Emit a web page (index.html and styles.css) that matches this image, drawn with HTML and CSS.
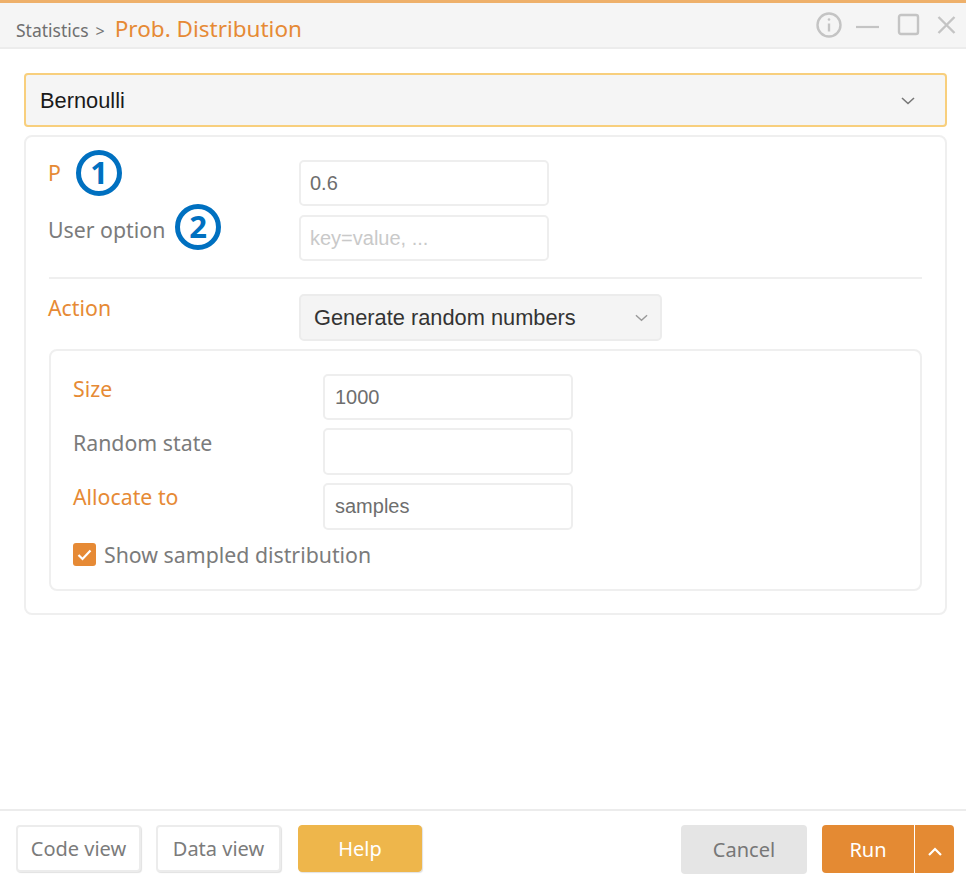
FILE: index.html
```html
<!DOCTYPE html>
<html lang="en">
<head>
    <meta charset="UTF-8">
    <meta name="viewport" content="width=device-width, initial-scale=1.0">
    <title>Prob. Distribution</title>
    <link rel="stylesheet" href="styles.css">
</head>
<body>
    <div class="window">
        <header class="titlebar">
            <div class="crumbs">
                <span class="crumb">Statistics</span>
                <span class="crumb-sep">&gt;</span>
                <span class="crumb-title">Prob. Distribution</span>
            </div>
            <div class="win-icons">
                <svg width="26" height="26" viewBox="0 0 26 26" fill="none" stroke="#c4c4c4" stroke-width="2.4">
                    <circle cx="13" cy="13" r="11.5"/>
                    <path d="M13 11.5v8"/>
                    <circle cx="13" cy="7.5" r="1.3" fill="#c4c4c4" stroke="none"/>
                </svg>
                <svg width="30" height="28" viewBox="0 0 30 28" fill="none" stroke="#c4c4c4" stroke-width="2.2">
                    <path d="M2 16h23"/>
                </svg>
                <svg width="28" height="24" viewBox="0 0 28 24" fill="none" stroke="#c4c4c4" stroke-width="2.4">
                    <rect x="3" y="2" width="19" height="19" rx="2"/>
                </svg>
                <svg width="21" height="20" viewBox="0 0 21 20" fill="none" stroke="#c4c4c4" stroke-width="2.4">
                    <path d="M2.5 2l16 16M18.5 2l-16 16"/>
                </svg>
            </div>
        </header>

        <main class="content">
            <div class="type-select">
                <span>Bernoulli</span>
                <svg class="chev" width="14" height="8" viewBox="0 0 14 8" fill="none" stroke="#777" stroke-width="1.6">
                    <path d="M1 1l6 5.5L13 1"/>
                </svg>
            </div>

            <section class="card">
                <div class="row row-p">
                    <label class="label req">P</label>
                    <input class="input" type="text" value="0.6">
                    <span class="badge badge-1">1</span>
                </div>
                <div class="row row-opt">
                    <label class="label">User option</label>
                    <input class="input" type="text" placeholder="key=value, ...">
                    <span class="badge badge-2">2</span>
                </div>
                <hr class="divider">
                <div class="row row-action">
                    <label class="label req">Action</label>
                    <div class="action-select">
                        <span>Generate random numbers</span>
                        <svg width="13" height="8" viewBox="0 0 14 8" fill="none" stroke="#999" stroke-width="1.5">
                            <path d="M1 1l6 5.5L13 1"/>
                        </svg>
                    </div>
                </div>

                <div class="inner">
                    <div class="row row-size">
                        <label class="label req">Size</label>
                        <input class="input" type="text" value="1000">
                    </div>
                    <div class="row row-state">
                        <label class="label">Random state</label>
                        <input class="input" type="text">
                    </div>
                    <div class="row row-alloc">
                        <label class="label req">Allocate to</label>
                        <input class="input" type="text" value="samples">
                    </div>
                    <div class="check-row">
                        <span class="check">
                            <svg width="15" height="12" viewBox="0 0 15 12" fill="none" stroke="#fff" stroke-width="2.2">
                                <path d="M1.5 6l4 4 8-8.5"/>
                            </svg>
                        </span>
                        <span class="check-label">Show sampled distribution</span>
                    </div>
                </div>
            </section>
        </main>

        <footer class="footer">
            <div class="footer-left">
                <button class="btn btn-plain">Code view</button>
                <button class="btn btn-plain">Data view</button>
                <button class="btn btn-help">Help</button>
            </div>
            <div class="footer-right">
                <button class="btn btn-cancel">Cancel</button>
                <div class="run-group">
                    <button class="btn btn-run">Run</button>
                    <button class="btn btn-more">
                        <svg width="16" height="10" viewBox="0 0 16 10" fill="none" stroke="#fff" stroke-width="2.2">
                            <path d="M2 8l6-6 6 6"/>
                        </svg>
                    </button>
                </div>
            </div>
        </footer>
    </div>
</body>
</html>
```

FILE: styles.css
```css
* { box-sizing: border-box; }
html, body { margin: 0; height: 100%; }
body { font-family: "Noto Sans", "Open Sans", sans-serif; background: #fff; color: #777; }

.window { height: 883px; display: flex; flex-direction: column; }

.titlebar { height: 49px; flex: none; display: flex; justify-content: space-between; background: #f5f5f5; border-top: 3px solid #eeb06a; border-bottom: 2px solid #ececec; padding: 0 9px 0 16px; }
.crumbs { display: flex; align-items: baseline; padding-top: 10px; }
.crumb { font-size: 17.5px; color: #6f6f6f; }
.crumb-sep { font-size: 16px; color: #777; margin: 0 10px 0 7px; }
.crumb-title { font-size: 22.5px; color: #e68a35; }
.win-icons { display: flex; align-items: center; gap: 12px; padding-bottom: 1px; }

.content { flex: 1; padding: 24px 19px 0 24px; }

.type-select { height: 54px; display: flex; align-items: center; justify-content: space-between; background: #f5f5f5; border: 2px solid #f8cf7d; border-radius: 4px; padding: 1px 30px 0 14px; font-family: "Liberation Sans", sans-serif; font-size: 21.8px; color: #1a1a1a; }

.card { position: relative; margin-top: 8px; height: 480px; border: 2px solid #efefef; border-radius: 8px; padding: 23px 23px 0 23px; }

.row { position: relative; display: flex; align-items: flex-start; }
.label { font-size: 21.3px; line-height: 28px; color: #7b7b7b; }
.label.req { color: #e68a35; }
.input { height: 46px; width: 250px; border: 2px solid #eeeeee; border-radius: 5px; background: #fff; padding: 0 10px; font-family: "Liberation Sans", sans-serif; font-size: 20px; color: #6e6e6e; outline: none; }
.input::placeholder { color: #c9c9c9; }

.row .label { width: 250px; flex: none; }
.row-p .label { margin: -1px 1px 0 -1px; }
.row-p .input, .row-opt .input { padding-left: 9px; }
.row-opt { margin-top: 9px; }
.row-opt .label { margin: 1px 1px 0 -1px; }

.badge { position: absolute; width: 46px; height: 46px; border: 5px solid #0070c0; border-radius: 50%; background: #fff; color: #0070c0; font-family: "Open Sans", sans-serif; font-weight: 700; font-size: 31px; line-height: 35px; text-align: center; }
.badge-1 { left: 27px; top: -10px; }
.badge-2 { left: 126px; top: -11px; }

.divider { border: none; border-top: 2px solid #efefef; margin: 16px 0 15px; }

.row-action .label { margin: 0 1px 0 -1px; }
.action-select { width: 363px; height: 47px; display: flex; align-items: center; justify-content: space-between; background: #f4f4f4; border: 2px solid #ececec; border-radius: 5px; padding: 1px 12px 0 13px; font-family: "Liberation Sans", sans-serif; font-size: 21.8px; color: #333; }

.inner { margin-top: 8px; height: 242px; border: 2px solid #efefef; border-radius: 8px; padding: 23px 22px 0 22px; }
.inner .row { margin-bottom: 8px; }
.row-size .label, .row-state .label { padding-top: 1px; }
.row-state .input { height: 47px; }
.row-alloc .input { height: 47px; }

.check-row { display: flex; align-items: center; gap: 8px; margin-top: 10px; }
.check { width: 23px; height: 23px; display: flex; align-items: center; justify-content: center; background: #e68a35; border-radius: 3px; }
.check-label { font-size: 21.3px; color: #7b7b7b; }

.footer { height: 74px; flex: none; display: flex; justify-content: space-between; border-top: 2px solid #ececec; padding: 14px 12px 0 16px; }
.footer-left, .footer-right { display: flex; align-items: flex-start; }
.footer-left { gap: 15px; }
.footer-right { gap: 15px; }

.btn { font-family: "Noto Sans", "Open Sans", sans-serif; font-size: 20px; height: 48px; border-radius: 4px; cursor: pointer; padding: 0; }
.btn-plain { width: 125px; height: 47px; background: #fff; border: 2px solid #ececec; box-shadow: 1px 1px 1px #e2e2e2; color: #7b7b7b; }
.btn-help { width: 124px; height: 47px; margin-left: 2px; background: #eeb64b; border: 1px solid #eeb64b; box-shadow: 1px 1px 1px #e2e2e2; color: #fff; }
.btn-cancel { width: 126px; height: 49px; background: #e5e5e5; border: none; color: #777; }
.run-group { display: flex; gap: 1px; }
.btn-run { width: 92px; background: #e48a33; border: none; color: #fff; border-radius: 4px 0 0 4px; }
.btn-more { width: 39px; background: #e48a33; border: none; border-radius: 0 4px 4px 0; }
```
